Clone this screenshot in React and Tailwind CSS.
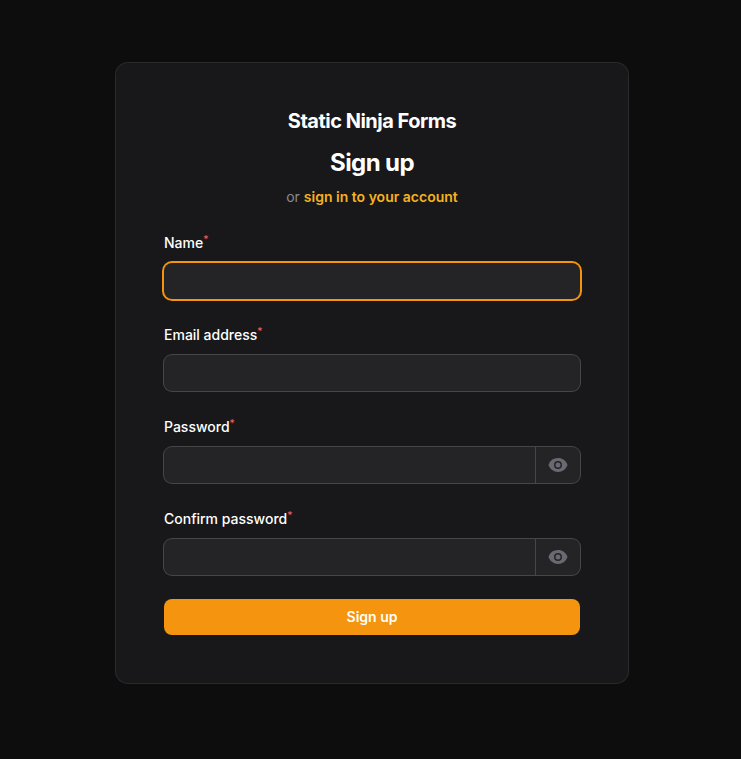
function Eye() {
  return (
    <svg viewBox="0 0 20 20" fill="currentColor" className="size-5 text-[#696971]">
      <path d="M10 12.5a2.5 2.5 0 1 0 0-5 2.5 2.5 0 0 0 0 5Z" />
      <path
        fillRule="evenodd"
        clipRule="evenodd"
        d="M.664 10.59a1.651 1.651 0 0 1 0-1.186A10.004 10.004 0 0 1 10 3c4.257 0 7.893 2.66 9.336 6.41.147.381.146.804 0 1.186A10.004 10.004 0 0 1 10 17c-4.257 0-7.893-2.66-9.336-6.41ZM14 10a4 4 0 1 1-8 0 4 4 0 0 1 8 0Z"
      />
    </svg>
  );
}

function Field({ label, focused, password }) {
  return (
    <div className="grid gap-2">
      <label className="text-sm leading-6 font-medium text-white">
        {label}
        <sup className="font-normal text-[#ef6363]">*</sup>
      </label>
      <div
        className={
          focused
            ? "flex h-9 rounded-lg bg-[#242426] ring-2 ring-[#f5940f]"
            : "flex h-9 rounded-lg bg-[#242426] ring-1 ring-[#464649]"
        }
      >
        <input
          type={password ? "password" : "text"}
          aria-label={label}
          className="min-w-0 flex-1 bg-transparent px-3 text-sm text-white outline-none"
        />
        {password && (
          <button type="button" aria-label="Show password" className="flex w-[45px] items-center justify-center border-l border-[#464649]">
            <Eye />
          </button>
        )}
      </div>
    </div>
  );
}

export default function App() {
  return (
    <div className="flex h-[759px] w-full justify-center bg-[#0d0d0d] pt-[63px] pl-[3px] font-['Inter',sans-serif]">
      <main className="h-[620px] w-[512px] rounded-xl bg-[#18181a] px-12 pt-12 ring-1 ring-[#2a2a2c]">
        <header className="flex flex-col items-center">
          <div className="text-xl leading-5 font-bold tracking-tight text-white">Static Ninja Forms</div>
          <h1 className="mt-4 text-2xl leading-8 font-bold tracking-tight text-white">Sign up</h1>
          <p className="mt-2 text-sm leading-5 text-[#8b8b93]">
            or <a className="font-semibold text-[#f6b21f]">sign in to your account</a>
          </p>
        </header>
        <form className="mt-6 grid gap-6">
          <Field label="Name" focused />
          <Field label="Email address" />
          <Field label="Password" password />
          <Field label="Confirm password" password />
          <button type="button" className="h-9 rounded-lg bg-[#f5940f] text-sm font-semibold text-white">
            Sign up
          </button>
        </form>
      </main>
    </div>
  );
}
